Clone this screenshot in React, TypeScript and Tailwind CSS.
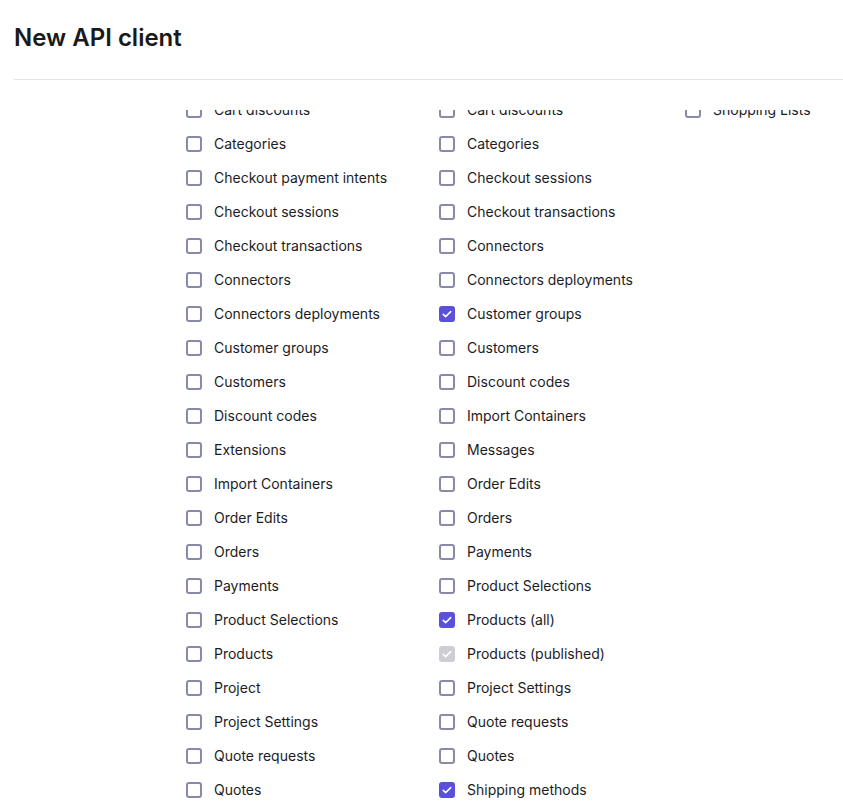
import React, { useLayoutEffect, useRef } from 'react';

type Scope = { label: string; checked?: boolean; disabled?: boolean };

const manageScopes: Scope[] = [
  { label: 'API clients' },
  { label: 'Associate Roles' },
  { label: 'Business Units' },
  { label: 'Cart discounts' },
  { label: 'Categories' },
  { label: 'Checkout payment intents' },
  { label: 'Checkout sessions' },
  { label: 'Checkout transactions' },
  { label: 'Connectors' },
  { label: 'Connectors deployments' },
  { label: 'Customer groups' },
  { label: 'Customers' },
  { label: 'Discount codes' },
  { label: 'Extensions' },
  { label: 'Import Containers' },
  { label: 'Order Edits' },
  { label: 'Orders' },
  { label: 'Payments' },
  { label: 'Product Selections' },
  { label: 'Products' },
  { label: 'Project' },
  { label: 'Project Settings' },
  { label: 'Quote requests' },
  { label: 'Quotes' },
  { label: 'Shipping methods' },
];

const viewScopes: Scope[] = [
  { label: 'Associate Roles' },
  { label: 'Attribute Groups' },
  { label: 'Business Units' },
  { label: 'Cart discounts' },
  { label: 'Categories' },
  { label: 'Checkout sessions' },
  { label: 'Checkout transactions' },
  { label: 'Connectors' },
  { label: 'Connectors deployments' },
  { label: 'Customer groups', checked: true },
  { label: 'Customers' },
  { label: 'Discount codes' },
  { label: 'Import Containers' },
  { label: 'Messages' },
  { label: 'Order Edits' },
  { label: 'Orders' },
  { label: 'Payments' },
  { label: 'Product Selections' },
  { label: 'Products (all)', checked: true },
  { label: 'Products (published)', checked: true, disabled: true },
  { label: 'Project Settings' },
  { label: 'Quote requests' },
  { label: 'Quotes' },
  { label: 'Shipping methods', checked: true },
  { label: 'Shopping Lists' },
];

const otherScopes: Scope[] = [
  { label: 'Customers' },
  { label: 'Orders' },
  { label: 'Payments' },
  { label: 'Shopping Lists' },
];

const CheckMark = () => (
  <svg viewBox="0 0 16 16" className="h-3 w-3" fill="none">
    <path d="M3 8.5l3.2 3L13 4.8" stroke="white" strokeWidth="2" strokeLinecap="round" strokeLinejoin="round" />
  </svg>
);

const ScopeRow = ({ scope }: { scope: Scope }) => {
  let box = 'border-2 border-[#878aa8] bg-white';
  if (scope.checked) box = scope.disabled ? 'bg-[#cdcdd4]' : 'bg-[#5a50dc]';
  return (
    <label className="flex h-[34px] items-center gap-3 whitespace-nowrap text-sm text-[#1c1c1f]">
      <span className={`flex h-4 w-4 shrink-0 items-center justify-center rounded-[3px] ${box}`}>
        {scope.checked && <CheckMark />}
      </span>
      {scope.label}
    </label>
  );
};

export default function App() {
  const listRef = useRef<HTMLDivElement>(null);

  // list is shown scrolled down to the "Cart discounts" row
  useLayoutEffect(() => {
    if (listRef.current) listRef.current.scrollTop = 119;
  }, []);

  return (
    <div className="h-[812px] overflow-hidden bg-white px-[14px] font-['Inter','Noto_Sans',sans-serif]">
      <h1 className="pt-[22px] text-2xl leading-8 font-semibold text-[#1a1a1a]">New API client</h1>
      <hr className="mt-[25px] -mr-[14px] border-[#e3e3e6]" />

      <div ref={listRef} className="mt-[30px] h-[702px] overflow-hidden">
        <div className="grid grid-cols-[253px_246px_auto] pl-[172px]">
          <div>
            {manageScopes.map((s) => (
              <ScopeRow key={s.label} scope={s} />
            ))}
          </div>
          <div>
            {viewScopes.map((s) => (
              <ScopeRow key={s.label} scope={s} />
            ))}
          </div>
          <div>
            {otherScopes.map((s) => (
              <ScopeRow key={s.label} scope={s} />
            ))}
          </div>
        </div>
      </div>
    </div>
  );
}
